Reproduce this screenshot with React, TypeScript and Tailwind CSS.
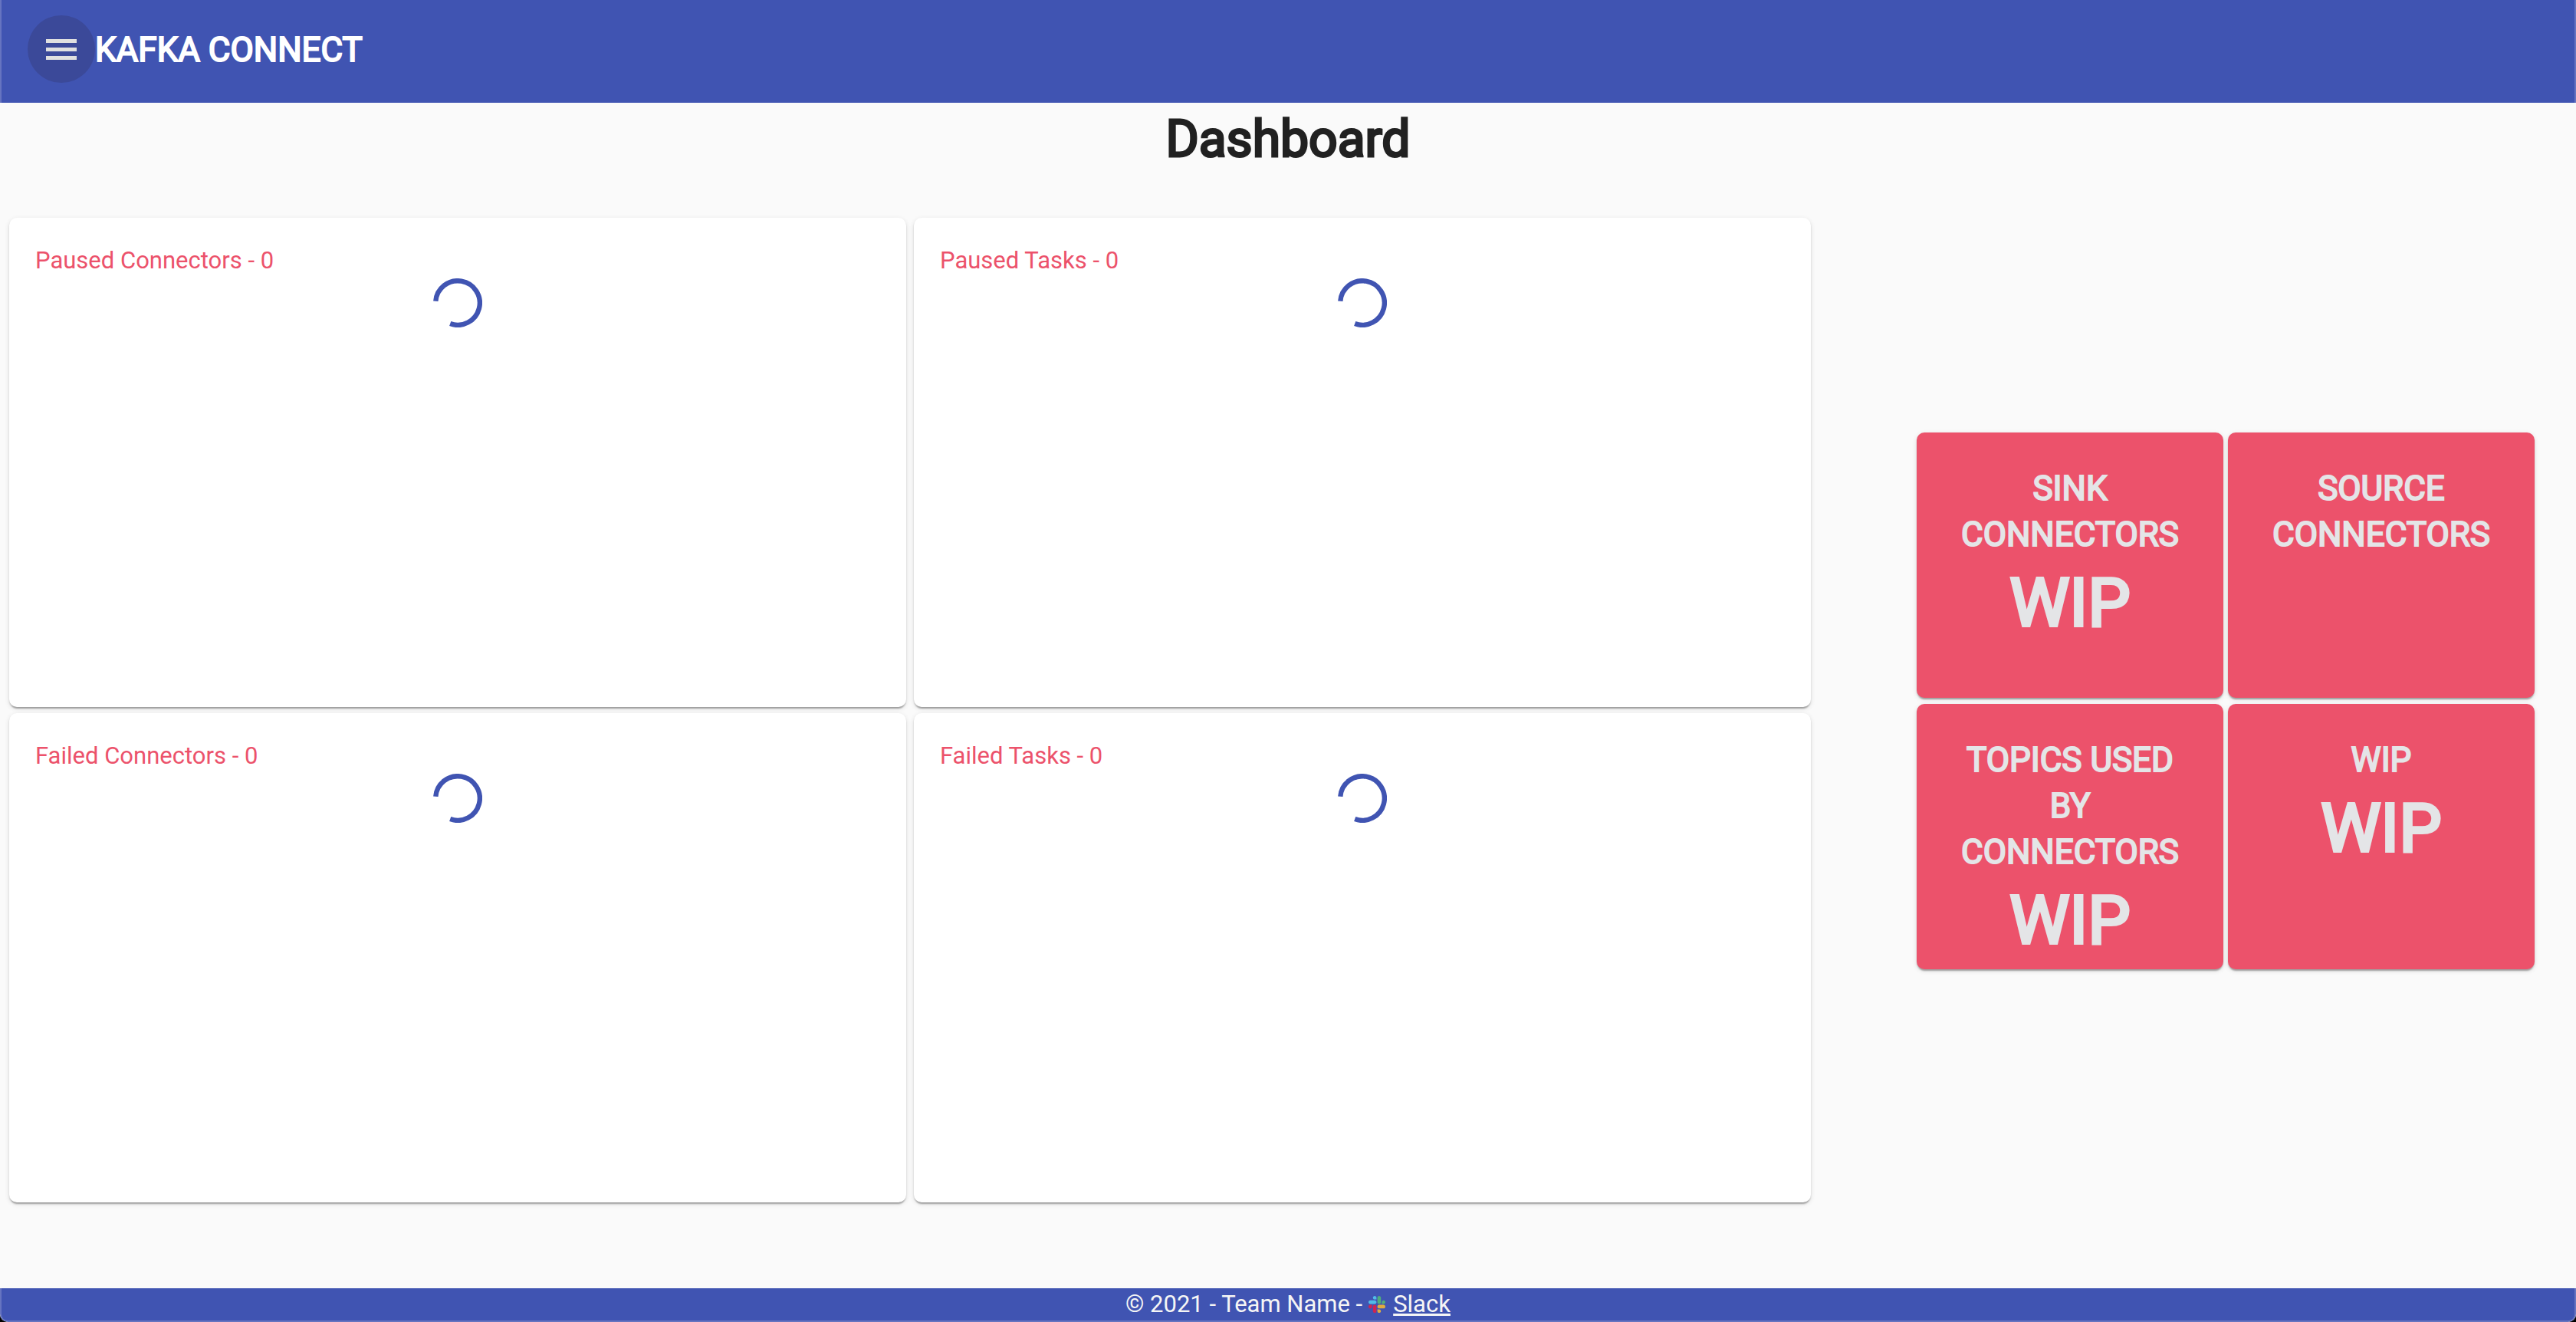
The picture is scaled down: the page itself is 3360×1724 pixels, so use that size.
import React from "react";

const panels = ["Paused Connectors - 0", "Paused Tasks - 0", "Failed Connectors - 0", "Failed Tasks - 0"];

const tiles = [
  { title: "SINK CONNECTORS", value: "WIP" },
  { title: "SOURCE CONNECTORS", value: "" },
  { title: "TOPICS USED BY CONNECTORS", value: "WIP" },
  { title: "WIP", value: "WIP" },
];

const elevation =
  "shadow-[0_4px_2px_-2px_rgba(0,0,0,0.2),0_2px_2px_0_rgba(0,0,0,0.14),0_2px_6px_0_rgba(0,0,0,0.12)]";

function Spinner() {
  return (
    <svg role="progressbar" aria-label="Loading" viewBox="-32 -32 64 64" className="mx-auto size-16">
      <path
        d="M-28.7 -2.2A28.8 28.8 0 1 1 -9.8 27.1"
        fill="none"
        stroke="#4054b2"
        strokeWidth="6.4"
      />
    </svg>
  );
}

function SlackLogo() {
  return (
    <svg viewBox="0 0 122.8 122.8" aria-hidden="true" className="mr-2.5 ml-2 size-[22px]">
      <path
        fill="#cd2553"
        d="M25.8 77.6c0 7.1-5.8 12.9-12.9 12.9S0 84.7 0 77.6s5.8-12.9 12.9-12.9h12.9v12.9zm6.5 0c0-7.1 5.8-12.9 12.9-12.9s12.9 5.8 12.9 12.9v32.3c0 7.1-5.8 12.9-12.9 12.9s-12.9-5.8-12.9-12.9V77.6z"
      />
      <path
        fill="#50bce8"
        d="M45.2 25.8c-7.1 0-12.9-5.8-12.9-12.9S38.1 0 45.2 0s12.9 5.8 12.9 12.9v12.9H45.2zm0 6.5c7.1 0 12.9 5.8 12.9 12.9s-5.8 12.9-12.9 12.9H12.9C5.8 58.1 0 52.3 0 45.2s5.8-12.9 12.9-12.9h32.3z"
      />
      <path
        fill="#4fae7c"
        d="M97 45.2c0-7.1 5.8-12.9 12.9-12.9s12.9 5.8 12.9 12.9-5.8 12.9-12.9 12.9H97V45.2zm-6.5 0c0 7.1-5.8 12.9-12.9 12.9s-12.9-5.8-12.9-12.9V12.9C64.7 5.8 70.5 0 77.6 0s12.9 5.8 12.9 12.9v32.3z"
      />
      <path
        fill="#deac41"
        d="M77.6 97c7.1 0 12.9 5.8 12.9 12.9s-5.8 12.9-12.9 12.9-12.9-5.8-12.9-12.9V97h12.9zm0-6.5c-7.1 0-12.9-5.8-12.9-12.9s5.8-12.9 12.9-12.9h32.3c7.1 0 12.9 5.8 12.9 12.9s-5.8 12.9-12.9 12.9H77.6z"
      />
    </svg>
  );
}

export default function App() {
  return (
    <div className="bg-black font-[Roboto,sans-serif] text-[#212121]">
      <div className="flex min-h-screen flex-col overflow-hidden rounded-b-[10px] bg-[#fafafa]">
        <header className="flex h-[134px] items-center border-x-2 border-[#6674c0] bg-[#4054b2] pr-9 pb-1.5 pl-[34px]">
          <button
            type="button"
            aria-label="Open menu"
            className="flex size-[88px] items-center justify-center rounded-full bg-[#3b4999] pt-0.5"
          >
            <svg viewBox="0 0 40 28" className="h-7 w-10" fill="#e0e0e0">
              <path d="M0 0h40v5H0zM0 11h40v5H0zM0 22h40v5H0z" />
            </svg>
          </button>
          <span className="pt-0.5 text-[44px] leading-[60px] text-white [-webkit-text-stroke:2px_currentColor]">
            KAFKA CONNECT
          </span>
        </header>

        <main className="flex-1">
          <h1 className="pt-2 text-center text-[66px] leading-[80px] [-webkit-text-stroke:3px_currentColor]">
            Dashboard
          </h1>
          <div className="mt-[62px] grid grid-cols-[2350fr_806fr] items-center gap-x-[138px] pr-[54px] pl-3">
            <section aria-label="Connector status" className="grid grid-cols-2 gap-x-2.5 gap-y-2">
              {panels.map((title) => (
                <article key={title} className={`h-[638px] rounded-[10px] bg-white px-[34px] pt-8 ${elevation}`}>
                  <h2 className="text-[31px] leading-[47px] text-[#ec526b]">{title}</h2>
                  <Spinner />
                </article>
              ))}
            </section>
            <section aria-label="Summary" className="mb-6 grid grid-cols-2 gap-x-1.5 gap-y-2">
              {tiles.map((tile) => (
                <article
                  key={tile.title}
                  className={`h-[346px] rounded-[10px] bg-[#ec526b] px-[52px] pt-[43px] text-center text-[#e4e5e7] ${elevation}`}
                >
                  <h2 className="text-[44px] leading-[60px] [-webkit-text-stroke:2px_currentColor]">{tile.title}</h2>
                  <p className="pt-1.5 text-[88px] leading-[105px] [-webkit-text-stroke:4px_currentColor]">
                    {tile.value}
                  </p>
                </article>
              ))}
            </section>
          </div>
        </main>

        <footer className="flex h-11 items-center justify-center rounded-b-[10px] border-x-2 border-b-2 border-[#6674c0] bg-[#4054b2] text-[31px] leading-[42px] text-[#f5f5f5]">
          <span>© 2021 - Team Name -</span>
          <SlackLogo />
          <a href="#slack" className="underline">
            Slack
          </a>
        </footer>
      </div>
    </div>
  );
}
